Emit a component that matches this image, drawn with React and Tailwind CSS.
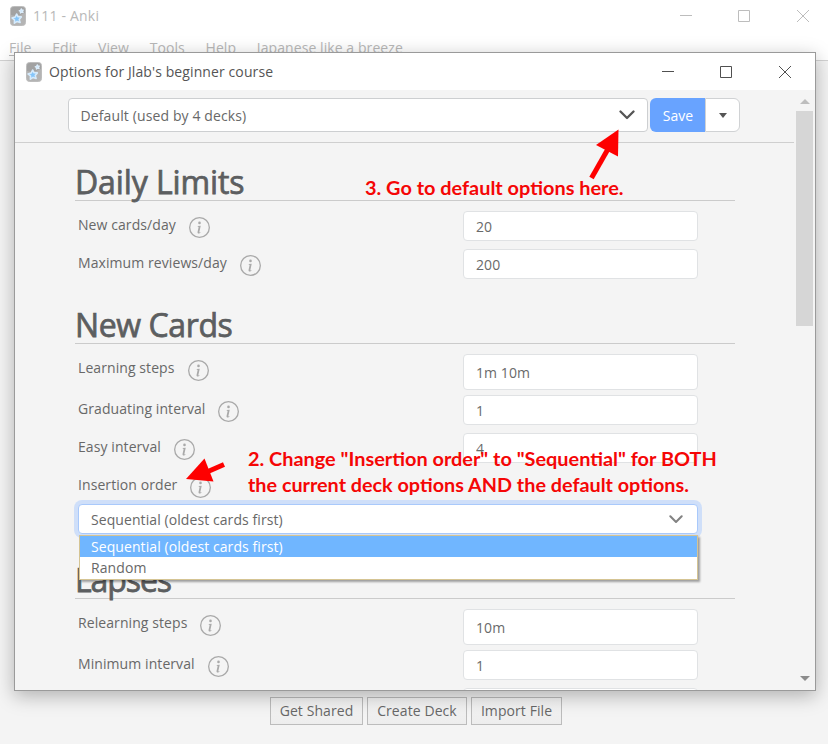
import React, { useState } from 'react';
import { BsInfoCircle } from 'react-icons/bs';

const menus = ['Edit', 'View', 'Tools', 'Help', 'Japanese like a breeze'];
const orders = ['Sequential (oldest cards first)', 'Random'];

const AnkiIcon = () => (
    <svg width="16" height="20" viewBox="0 0 16 20" className="shrink-0">
        <rect x="0.5" y="0.5" width="15" height="19" rx="3" fill="#b4b4b4" stroke="#bdbdbd" />
        <path d="M1 9Q8 11 15 7V4Q15 1 12 1H4Q1 1 1 4Z" fill="#a2a2a2" />
        <path
            d="M6.6 8l1.500 2.800 3.200.1-2.100 2.500.9 3.100-3-1.100-2.700 1.800.1-3.300-2.500-2 3.200-.9z"
            fill="#86c6fa"
            stroke="#d6ebfc"
            strokeWidth="1.600"
            strokeLinejoin="round"
        />
        <path
            d="M11.300 2.800l.6 1.300 1.500-.1-.9 1.200.6 1.400-1.500-.4-1.200.9v-1.500l-1.200-.9 1.400-.5z"
            fill="#c6e3fa"
            stroke="#dcedfb"
            strokeWidth="1.200"
            strokeLinejoin="round"
        />
    </svg>
);

const WindowButtons = ({ className }) => (
    <svg width="130" height="14" viewBox="0 0 130 14" fill="none" stroke="currentColor" className={`ml-auto shrink-0 ${className}`}>
        <path d="M0 6.500h12" />
        <path d="M58.500 1.500h11v11h-11z" />
        <path d="M117 1l12 12M129 1l-12 12" />
    </svg>
);

const Chevron = ({ className }) => (
    <svg viewBox="0 0 16 10" fill="none" stroke="currentColor" strokeWidth="2.300" strokeLinecap="round" strokeLinejoin="round" className={className}>
        <path d="M1.500 1.500l6.500 6.500 6.500-6.500" />
    </svg>
);

const Section = ({ title, titleClass, children }) => (
    <section className="mb-[26px]">
        <h1 className={`h-[39px] border-b border-[#cbcbcb] text-[32px] leading-[40px] whitespace-nowrap text-[#5c5e60] [-webkit-text-stroke:0.75px_#5c5e60] ${titleClass}`}>
            {title}
        </h1>
        <div className="pt-[10px] pl-[3px]">{children}</div>
    </section>
);

const Label = ({ text, className }) => (
    <div className={`flex items-start whitespace-nowrap ${className || ''}`}>
        <span className="leading-7">{text}</span>
        <BsInfoCircle className="ml-[13px] mt-[6px] size-[21px] text-[#a9a9a9]" />
    </div>
);

const Row = ({ label, value, tall, last }) => (
    <div className={`flex ${last ? '' : tall ? 'mb-[5px]' : 'mb-2'}`}>
        <Label text={label} className="w-[385px] h-[30px]" />
        <input
            defaultValue={value}
            className={`w-[235px] rounded border border-[#e0e2e4] bg-white px-3 text-[#6a6a6a] outline-none ${tall ? 'h-9 pt-px' : 'h-[30px]'}`}
        />
    </div>
);

const App = () => {
    const [order, setOrder] = useState(orders[0]);

    return (
        <div className="relative flex h-[744px] w-[828px] flex-col overflow-hidden bg-[#f4f4f4] font-['Open_Sans',sans-serif] text-sm tracking-[0.08px] text-[#686868]">
            <header className="h-[61px] shrink-0 border-b border-[#d2d2d2] bg-white text-[#b8b8b8]">
                <div className="flex h-[31px] items-center pr-[18px] pl-[10px]">
                    <AnkiIcon />
                    <span className="ml-[7px] tracking-[0.2px]">111 - Anki</span>
                    <WindowButtons className="text-[#bdbdbd]" />
                </div>
                <nav className="flex gap-[20.700px] pl-[9px] leading-[33px]">
                    <span><u className="underline-offset-2">F</u>ile</span>
                    {menus.map((m) => (
                        <span key={m}>{m}</span>
                    ))}
                </nav>
            </header>

            <footer className="mt-auto mb-[19px] flex justify-center gap-1 pl-1">
                <button className="h-7 w-[93px] border border-[#bcbcbc] bg-linear-to-b from-[#f6f6f6] to-[#ededed]">Get Shared</button>
                <button className="h-7 w-[100px] border border-[#bcbcbc] bg-linear-to-b from-[#f6f6f6] to-[#ededed]">Create Deck</button>
                <button className="h-7 w-[91px] border border-[#bcbcbc] bg-linear-to-b from-[#f6f6f6] to-[#ededed]">Import File</button>
            </footer>

            {/* options dialog, floats over the main window */}
            <div className="absolute top-[52px] left-[14px] flex h-[639px] w-[802px] flex-col border border-[#9a9a9a] bg-[#f4f4f4] shadow-[0_5px_18px_rgba(0,0,0,0.28)]">
                <div className="flex h-[37px] shrink-0 items-center bg-white pr-[23px] pl-[11px]">
                    <AnkiIcon />
                    <span className="ml-[7px] tracking-[0.1px] text-[#555]">Options for Jlab's beginner course</span>
                    <WindowButtons className="text-[#505050]" />
                </div>

                <div className="flex min-h-0 flex-1">
                    <div className="flex w-[779px] flex-col overflow-hidden">
                        <div className="flex h-[53px] shrink-0 border-b border-[#cfcfcf] pt-2 pl-[53px]">
                            <div className="flex h-[34px] w-[580px] items-center justify-between rounded border border-[#cdcfd1] bg-white pr-3 pl-[11.500px]">
                                <span className="pt-[2px] tracking-[0.12px]">Default (used by 4 decks)</span>
                                <Chevron className="w-4 text-[#555]" />
                            </div>
                            <button className="ml-[2px] h-[34px] w-[55px] rounded-l-md bg-[#68a3ff] pt-px pl-px text-white">Save</button>
                            <button className="flex h-[34px] w-[35px] items-center justify-center rounded-r-md border border-[#d0d2d4] bg-white">
                                <span className="border-x-[4.5px] border-t-[5px] border-x-transparent border-t-[#555]" />
                            </button>
                        </div>

                        <div className="min-h-0 flex-1 overflow-hidden pt-[19px] pl-[60px]">
                            <div className="w-[660px]">
                                <Section title="Daily Limits" titleClass="-tracking-[0.1px]">
                                    <Row label="New cards/day" value="20" />
                                    <Row label="Maximum reviews/day" value="200" last />
                                </Section>

                                <Section title="New Cards" titleClass="-tracking-[0.4px]">
                                    <Row label="Learning steps" value="1m 10m" tall />
                                    <Row label="Graduating interval" value="1" />
                                    <Row label="Easy interval" value="4" />
                                    <Label text="Insertion order" className="h-[33px]" />
                                    <div className="relative w-[620px]">
                                        <div className="flex h-[30px] items-center justify-between rounded border border-[#a9c9fb] bg-white pt-px pr-[14px] pl-3 ring-4 ring-[#cfdff9]">
                                            <span>{order}</span>
                                            <Chevron className="w-[14px] text-[#828282]" />
                                        </div>
                                        <ul className="absolute top-[31px] left-px z-10 w-[619px] border border-[#d5c493] bg-white pb-px shadow-[2px_2px_2px_rgba(0,0,0,0.35)]">
                                            {orders.map((o) => (
                                                <li
                                                    key={o}
                                                    onClick={() => setOrder(o)}
                                                    className={`h-[21px] pl-[11px] leading-[21px] ${o === order ? 'bg-[#70b6ff] text-white' : ''}`}
                                                >
                                                    {o}
                                                </li>
                                            ))}
                                        </ul>
                                    </div>
                                </Section>

                                <Section title="Lapses" titleClass="-tracking-[1.1px]">
                                    <Row label="Relearning steps" value="10m" tall />
                                    <Row label="Minimum interval" value="1" />
                                    <Row label="" value="" last />
                                </Section>
                            </div>
                        </div>
                    </div>

                    <div className="ml-[2px] flex w-[17px] flex-col items-center">
                        <span className="mt-[9px] border-x-[5px] border-b-[5px] border-x-transparent border-b-[#bdbdbd]" />
                        <div className="mt-[7px] h-[215px] w-full bg-[#d6d6d6]" />
                        <span className="mt-auto mb-[9px] border-x-[5px] border-t-[5px] border-x-transparent border-t-[#8c8c8c]" />
                    </div>
                </div>
            </div>

            {/* tutorial annotations */}
            <div className="pointer-events-none absolute inset-0 font-['Lato',sans-serif] text-[19.9px] leading-[26px] font-bold tracking-normal whitespace-nowrap text-[#f50606]">
                <p className="absolute top-[174px] left-[365px]">3. Go to default options here.</p>
                <p className="absolute top-[445px] left-[248px]">
                    2. Change "Insertion order" to "Sequential" for BOTH
                    <br />
                    <span className="text-[19.800px]">the current deck options AND the default options.</span>
                </p>
                <svg width="828" height="744" className="absolute inset-0" fill="#fe0000" stroke="#fe0000">
                    <path d="M618.500 129.500L596 145L618 156.500Z" stroke="none" />
                    <path d="M608 149L591.500 178" strokeWidth="5" />
                    <path d="M186 479L204.500 458.500L213.500 481.500Z" stroke="none" />
                    <path d="M208 471.500L224 464.500" strokeWidth="5" />
                </svg>
            </div>
        </div>
    );
};

export default App;
